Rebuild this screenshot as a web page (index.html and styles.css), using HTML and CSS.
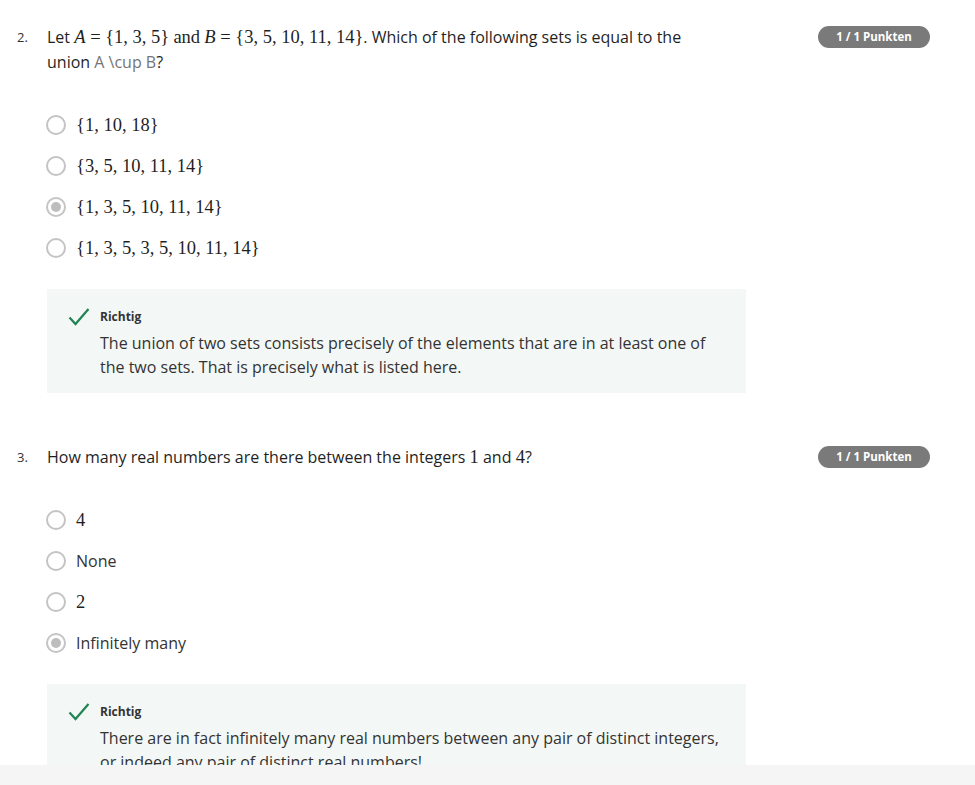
FILE: index.html
```html
<!DOCTYPE html>
<html>
<head>
<meta charset="utf-8">
<link rel="stylesheet" href="styles.css">
</head>
<body>
<div class="page">
  <div class="question q2">
    <div class="qhead">
      <div class="num">2.</div>
      <div class="qtext">Let <span class="m"><i>A</i> = {1, 3, 5}</span> <span class="m">and</span> <span class="m"><i>B</i> = {3, 5, 10, 11, 14}</span>. Which of the following sets is equal to the union <span class="grey">A \cup B</span>?</div>
      <div class="badge">1 / 1 Punkten</div>
    </div>
    <div class="options">
      <div class="opt"><span class="radio"></span><span class="m">{1, 10, 18}</span></div>
      <div class="opt"><span class="radio"></span><span class="m">{3, 5, 10, 11, 14}</span></div>
      <div class="opt"><span class="radio on"></span><span class="m">{1, 3, 5, 10, 11, 14}</span></div>
      <div class="opt"><span class="radio"></span><span class="m">{1, 3, 5, 3, 5, 10, 11, 14}</span></div>
    </div>
    <div class="feedback">
      <svg class="check" width="22" height="20" viewBox="0 0 22 20"><path d="M1.5 10.5 L7.5 17 L20.5 2" fill="none" stroke="#1f8354" stroke-width="2.2"/></svg>
      <div class="fbody">
        <div class="ftitle">Richtig</div>
        <div class="ftext">The union of two sets consists precisely of the elements that are in at least one of the two sets. That is precisely what is listed here.</div>
      </div>
    </div>
  </div>

  <div class="question q3">
    <div class="qhead">
      <div class="num">3.</div>
      <div class="qtext">How many real numbers are there between the integers <span class="m">1</span> and <span class="m">4</span>?</div>
      <div class="badge">1 / 1 Punkten</div>
    </div>
    <div class="options">
      <div class="opt"><span class="radio"></span><span class="m">4</span></div>
      <div class="opt"><span class="radio"></span><span class="t">None</span></div>
      <div class="opt"><span class="radio"></span><span class="m">2</span></div>
      <div class="opt"><span class="radio on"></span><span class="t">Infinitely many</span></div>
    </div>
    <div class="feedback">
      <svg class="check" width="22" height="20" viewBox="0 0 22 20"><path d="M1.5 10.5 L7.5 17 L20.5 2" fill="none" stroke="#1f8354" stroke-width="2.2"/></svg>
      <div class="fbody">
        <div class="ftitle">Richtig</div>
        <div class="ftext">There are in fact infinitely many real numbers between any pair of distinct integers, or indeed any pair of distinct real numbers!</div>
      </div>
    </div>
  </div>
</div>
<div class="footer"></div>
</body>
</html>
```
FILE: styles.css
```css
html, body {
  margin: 0;
  padding: 0;
  background: #fff;
}
body {
  width: 975px;
  height: 785px;
  overflow: hidden;
  font-family: "Open Sans", "Liberation Sans", sans-serif;
  color: #1f1f1f;
}
.page {
  height: 765px;
  overflow: hidden;
  padding-top: 25px;
  box-sizing: border-box;
}
.footer {
  height: 20px;
  background: #f5f5f5;
}
.question {
  padding-left: 17px;
}
.q3 {
  margin-top: 52px;
}
.qhead {
  display: flex;
  align-items: flex-start;
}
.num {
  width: 30px;
  flex: none;
  font-size: 13px;
  line-height: 25px;
  color: #333;
}
.qtext {
  width: 670px;
  font-size: 16px;
  line-height: 25px;
  color: #1f1f1f;
}
.m {
  font-family: "Liberation Serif", "DejaVu Serif", serif;
  font-size: 18.5px;
  line-height: 1;
}
.m i {
  font-style: italic;
}
.grey {
  color: #757575;
}
.badge {
  margin-left: auto;
  margin-right: 45px;
  margin-top: 1px;
  width: 112px;
  height: 22px;
  border-radius: 11px;
  background: #7a7a7a;
  color: #fff;
  font-size: 11.5px;
  font-weight: 700;
  line-height: 22px;
  text-align: center;
  flex: none;
}
.options {
  margin-left: 30px;
  margin-top: 38px;
  display: flex;
  flex-direction: column;
  gap: 17px;
}
.opt {
  display: flex;
  align-items: center;
  gap: 10px;
  height: 24px;
}
.radio {
  width: 16px;
  height: 16px;
  border: 2px solid #c4c4c4;
  border-radius: 50%;
  flex: none;
  position: relative;
  margin-left: -1px;
}
.radio.on::after {
  content: "";
  position: absolute;
  left: 3px;
  top: 3px;
  width: 10px;
  height: 10px;
  border-radius: 50%;
  background: #bdbdbd;
}
.t {
  font-size: 16px;
  color: #333;
}
.feedback {
  margin-left: 30px;
  margin-top: 29px;
  width: 699px;
  background: #f3f8f6;
  display: flex;
  gap: 10px;
  padding: 18px 20px 14px 21px;
  box-sizing: border-box;
}
.check {
  flex: none;
  margin-top: 0px;
}
.ftitle {
  font-size: 12px;
  font-weight: 700;
  line-height: 20px;
  color: #333;
}
.ftext {
  font-size: 16px;
  line-height: 24px;
  color: #333;
  margin-top: 4px;
}
```
